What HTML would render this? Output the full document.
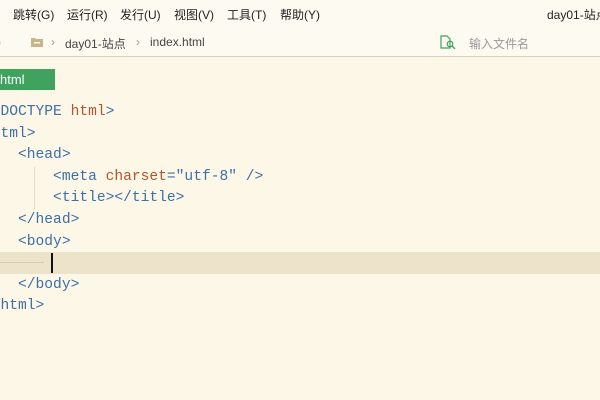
<!DOCTYPE html>
<html><head><style>
body{margin:0;width:600px;height:400px;overflow:hidden;background:#fdf7e7;font-family:"Liberation Sans","Noto Sans CJK SC",sans-serif;position:relative}
.menu{position:absolute;top:0;left:0;width:600px;height:28px;background:#fdfaf2;font-size:12px;color:#222;overflow:hidden}
.menu span{position:absolute;top:6px;white-space:nowrap}
.bc{position:absolute;top:28px;left:0;width:600px;height:28px;background:#fdfaf2;border-bottom:1px solid #d9cfb5;font-size:12px;color:#444}
.bc span{position:absolute;top:7px;white-space:nowrap}
.tab{position:absolute;left:0;top:69px;width:55px;height:21px;background:#3fa35f;color:#fff;font-size:13px;line-height:21px;padding-left:0}
.code{position:absolute;left:-17px;top:102px;font-family:"Liberation Mono",monospace;font-size:14.6px;line-height:21.6px;color:#3d6fa8;white-space:pre}
.o{color:#b5542c}
.hl{position:absolute;left:0;top:252px;width:600px;height:22px;background:#ede3ca}
.cur{position:absolute;left:51px;top:253px;width:2px;height:20px;background:#111}
.guide{position:absolute;left:34px;top:167px;width:1px;height:42px;background:#e6dcc4}
</style></head><body>
<div class="menu">
<span style="left:13px">跳转(G)</span><span style="left:67px">运行(R)</span><span style="left:120px">发行(U)</span><span style="left:174px">视图(V)</span><span style="left:227px">工具(T)</span><span style="left:280px">帮助(Y)</span><span style="left:547px">day01-站点</span>
</div>
<div class="bc">
<span style="left:-3px;color:#3fa35f">)</span>
<svg style="position:absolute;left:31px;top:9px" width="12" height="10"><path d="M0 1h4l1 1h7v8H0z" fill="#c9b48a"/><rect x="3" y="5" width="6" height="1.5" fill="#fdfaf2"/></svg>
<span style="left:51px;color:#999">›</span>
<span style="left:65px">day01-站点</span>
<span style="left:136px;color:#999">›</span>
<span style="left:150px">index.html</span>
<svg style="position:absolute;left:440px;top:7px" width="16" height="14"><path d="M1 1h6l3 3v9H1z" fill="none" stroke="#3fa35f" stroke-width="1.2"/><circle cx="10" cy="9" r="2.8" fill="none" stroke="#3fa35f" stroke-width="1.2"/><path d="M12 11l3 3" stroke="#3fa35f" stroke-width="1.3"/></svg>
<span style="left:469px;color:#999">输入文件名</span>
</div>
<div class="tab">html</div>
<div class="hl"></div>
<div class="guide"></div>
<div class="code">&lt;!DOCTYPE <span class="o">html</span>&gt;
&lt;html&gt;
    &lt;head&gt;
        &lt;meta <span class="o">charset</span>="utf-8" /&gt;
        &lt;title&gt;&lt;/title&gt;
    &lt;/head&gt;
    &lt;body&gt;

    &lt;/body&gt;
&lt;/html&gt;</div>
<div class="cur"></div>
<div style="position:absolute;left:0;top:262px;width:44px;height:1px;background:#d8ccb0"></div>
</body></html>
